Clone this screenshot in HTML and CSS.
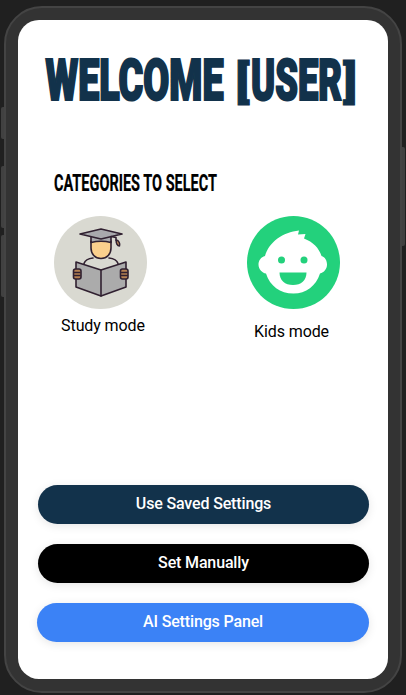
FILE: index.html
```html
<!DOCTYPE html>
<html lang="en">
<head>
<meta charset="utf-8">
<title>Welcome</title>
<link rel="stylesheet" href="styles.css">
</head>
<body>
<div class="phone">
  <span class="key key-mute"></span>
  <span class="key key-up"></span>
  <span class="key key-down"></span>
  <span class="key key-power"></span>
  <main class="screen">
    <svg class="title" width="330" height="80" role="heading" aria-level="1">
      <text x="7.500" y="67" textLength="178" lengthAdjust="spacingAndGlyphs">WELCOME</text>
      <text class="bracket" x="197.500" y="63.500" textLength="14" lengthAdjust="spacingAndGlyphs">[</text>
      <text x="213" y="67" textLength="91" lengthAdjust="spacingAndGlyphs">USER</text>
      <text class="bracket" x="305" y="63.500" textLength="14" lengthAdjust="spacingAndGlyphs">]</text>
    </svg>
    <svg class="subtitle" width="180" height="34" role="heading" aria-level="2">
      <text x="0" y="26" textLength="163" lengthAdjust="spacingAndGlyphs">CATEGORIES TO SELECT</text>
    </svg>
    <section class="modes">
      <div class="mode">
        <svg width="93" height="93" viewBox="0 0 93 93">
          <circle cx="46.5" cy="46.5" r="46.5" fill="#d9d9d1"/>
          <g stroke="#302030" stroke-width="1.6" stroke-linejoin="round" stroke-linecap="round">
            <path d="M30 47.500c1-3 4-5 9-5.500M64 47.500c-1-3-4-5-9-5.500" fill="none"/>
            <path d="M37 25v7c0 6 4 10.500 10 10.500s10-4.500 10-10.500v-7z" fill="#fbd08d"/>
            <path d="M37 20v6.500c6-1.500 14-1.500 20 0v-6.500z" fill="#a9a9ad"/>
            <path d="M26 18l21-5 21 5-21 5z" fill="#a9a9ad"/>
            <path d="M57 20.500l5 1v3" fill="none"/>
            <path d="M62.500 24c2 0 4 4 3 6-2 0-4-3-3-6z" fill="#c7935d"/>
            <path d="M22 46l25 8 25-8v25l-25 9-25-9z" fill="#ababab"/>
            <path d="M47 54v26"/>
            <rect x="19.5" y="53" width="7.500" height="10" rx="2" fill="#b58052"/>
            <rect x="66.5" y="53" width="7.500" height="10" rx="2" fill="#b58052"/>
            <path d="M20 56.500h6M20 59.500h6M67.500 56.500h6M67.500 59.500h6" stroke-width="1.300"/>
          </g>
        </svg>
        <span class="mode-name">Study mode</span>
      </div>
      <div class="mode mode-kids">
        <svg width="93" height="93" viewBox="0 0 93 93">
          <circle cx="46.500" cy="46.500" r="46.500" fill="#23d17c"/>
          <path fill="#fff" d="M18 40C22 26 36 16 52 14.500L51 18.500L58.500 18L57 22.500C66 26 72 32 74.500 40C78 41 80 44.500 80 48.500C80 53 77 56.500 73 57.500C69 70 59 77.500 46.500 77.500C33 77.500 23 70 19 57.500C15 57 11.500 53 11.500 48.500C11.500 44.500 14 41 18 40Z"/>
          <g fill="#23d17c"><circle cx="34.500" cy="44" r="3.500"/><circle cx="57" cy="44" r="3.500"/>
          <path d="M32.500 56.500h27c0 8-5.500 12.500-13.500 12.500s-13.500-4.500-13.500-12.500z"/></g>
        </svg>
        <span class="mode-name">Kids mode</span>
      </div>
    </section>
    <nav class="actions">
      <button class="action saved">Use Saved Settings</button>
      <button class="action manual">Set Manually</button>
      <button class="action ai">AI Settings Panel</button>
    </nav>
  </main>
</div>
</body>
</html>
```
FILE: styles.css
```css
* { box-sizing: border-box; }
body {
  margin: 0;
  height: 695px;
  padding: 6px 4px 2px;
  overflow: hidden;
  background: #202020;
  font-family: Roboto, sans-serif;
}
.phone {
  position: relative;
  width: 398px;
  height: 687px;
  padding: 12px;
  border: 2px solid #444;
  border-radius: 38px;
  background: #333;
}
.key {
  position: absolute;
  width: 3px;
  left: -5px;
  background: #414141;
  border-radius: 2px 0 0 2px;
}
.key-mute { top: 99px; height: 32px; }
.key-up { top: 158px; height: 62px; }
.key-down { top: 227px; height: 62px; }
.key-power { top: 139px; height: 99px; left: auto; right: -5px; border-radius: 0 2px 2px 0; }
.screen {
  display: flex;
  flex-direction: column;
  width: 370px;
  height: 659px;
  padding: 13px 19px 37.500px 19.500px;
  border-radius: 21px;
  background: #fff;
}
.title {
  display: block;
  flex: none;
  font-size: 57px;
  font-weight: 900;
  fill: #12324b;
  stroke: #12324b;
  stroke-width: 2.200px;
}
.bracket { font-size: 45px; stroke-width: 1px; }
.subtitle {
  display: block;
  flex: none;
  margin: 52px 0 0 16.500px;
  overflow: visible;
  font-size: 24px;
  font-weight: 700;
  stroke: #000;
  stroke-width: .2px;
}
.modes {
  display: flex;
  gap: 100px;
  margin: 17px 0 0 16.500px;
}
.mode {
  display: flex;
  flex-direction: column;
  align-items: center;
  width: 93px;
}
.mode-name {
  margin: 7px 0 0 5px;
  font-size: 16px;
  line-height: 19px;
  letter-spacing: -.1px;
  white-space: nowrap;
}
.mode-kids .mode-name { margin: 13px 4px 0 0; }
.actions {
  display: flex;
  flex-direction: column;
  align-items: flex-end;
  gap: 20px;
  margin-top: auto;
}
.action {
  width: 331px;
  height: 39px;
  padding: 0 0 1px;
  border: 0;
  border-radius: 20px;
  box-shadow: 0 2px 10px rgba(0, 0, 0, .1);
  color: #fff;
  font: 500 16px Roboto, sans-serif;
  letter-spacing: -.15px;
}
.saved { background: #12324b; }
.manual { background: #000; }
.ai { width: 332px; background: #3b82f6; }
```
